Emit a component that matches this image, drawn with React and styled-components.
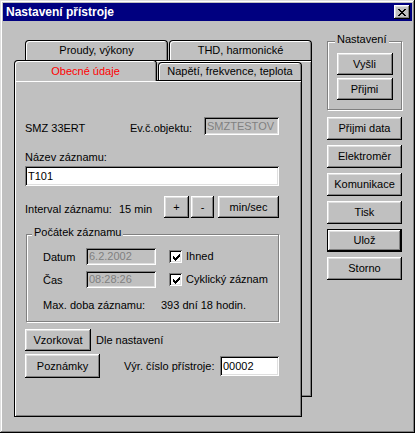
import React from "react";
import styled, { createGlobalStyle, css } from "styled-components";

const Global = createGlobalStyle`
  html, body { margin: 0; padding: 0; background: #c0c0c0; }
  body { font-family: "Liberation Sans", Arial, sans-serif; font-size: 11px; color: #000; }
  * { box-sizing: border-box; }
`;

const raised = css`
  box-shadow: inset -1px -1px 0 #000, inset 1px 1px 0 #fff,
    inset -2px -2px 0 #808080, inset 2px 2px 0 #dfdfdf;
`;
const sunken = css`
  box-shadow: inset 1px 1px 0 #808080, inset -1px -1px 0 #fff,
    inset 2px 2px 0 #000, inset -2px -2px 0 #dfdfdf;
`;

const Window = styled.div`
  width: 415px;
  height: 433px;
  background: #c0c0c0;
  padding: 3px;
  display: flex;
  flex-direction: column;
  box-shadow: inset -1px -1px 0 #000, inset 1px 1px 0 #dfdfdf,
    inset -2px -2px 0 #808080, inset 2px 2px 0 #fff;
`;

const TitleBar = styled.div`
  height: 18px;
  background: #000080;
  display: flex;
  align-items: center;
  justify-content: space-between;
  padding: 0 2px 0 3px;
`;

const TitleText = styled.span`
  color: #fff;
  font-weight: bold;
  font-size: 12px;
  line-height: 14px;
`;

const CloseButton = styled.div`
  width: 16px;
  height: 14px;
  background: #c0c0c0;
  display: grid;
  place-items: center;
  padding-right: 1px;
  ${raised}
`;

const Body = styled.div`
  display: flex;
  padding: 12px 0 0 11px;
`;

const TabStack = styled.div`
  margin-top: 7px;
  width: 298px;
  height: 377px;
  display: grid;
  & > * { grid-area: 1 / 1; }
`;

const BackCard = styled.div`
  margin-left: 11px;
  margin-bottom: 20px;
  display: flex;
  flex-direction: column;
`;

const TabRow = styled.div`
  display: flex;
  gap: 1px;
  height: 20px;
  align-items: flex-end;
  position: relative;
  z-index: 1;
`;

const Tab = styled.div`
  width: ${(p) => p.$w}px;
  height: ${(p) => (p.$active ? 21 : p.$low ? 18 : 20)}px;
  margin-bottom: ${(p) => (p.$active ? -1 : 0)}px;
  background: #c0c0c0;
  border: 1px solid #000;
  border-bottom: none;
  border-radius: 4px 4px 0 0;
  box-shadow: inset 1px 1px 0 #fff, inset -1px 0 0 #808080;
  display: flex;
  align-items: center;
  justify-content: center;
  line-height: 13px;
  padding-top: ${(p) => (p.$active ? 1 : 0)}px;
  color: ${(p) => (p.$active ? "#ff0000" : "#000")};
  white-space: nowrap;
`;

const BackBody = styled.div`
  flex: 1;
  background: #c0c0c0;
  border: 1px solid #000;
  box-shadow: inset 1px 1px 0 #fff, inset -1px -1px 0 #808080;
`;

const FrontCard = styled.div`
  margin-top: 20px;
  margin-right: 10px;
  display: flex;
  flex-direction: column;
`;

const Panel = styled.div`
  flex: 1;
  background: #c0c0c0;
  border: 1px solid #000;
  box-shadow: inset 1px 1px 0 #fff, inset -1px -1px 0 #808080;
  padding: 36px 22px 0 10px;
  display: flex;
  flex-direction: column;
`;

const Row = styled.div`
  display: flex;
  align-items: ${(p) => p.$align || "flex-end"};
  margin-top: ${(p) => p.$mt || 0}px;
`;

const Label = styled.span`
  display: block;
  line-height: 13px;
  white-space: nowrap;
  width: ${(p) => (p.$w ? `${p.$w}px` : "auto")};
  margin-left: ${(p) => p.$ml || 0}px;
  margin-bottom: ${(p) => p.$mb || 0}px;
  margin-top: ${(p) => p.$mt || 0}px;
`;

const Edit = styled.div`
  width: ${(p) => (p.$w ? `${p.$w}px` : "100%")};
  height: ${(p) => p.$h}px;
  margin-top: ${(p) => p.$mt || 0}px;
  margin-left: ${(p) => (p.$auto ? "auto" : "0")};
  background: ${(p) => (p.$disabled ? "#c0c0c0" : "#fff")};
  color: ${(p) => (p.$disabled ? "#808080" : "#000")};
  ${sunken}
  display: flex;
  align-items: center;
  padding: 0 2px 0 3px;
  line-height: 13px;
  white-space: nowrap;
  overflow: hidden;
`;

const Button = styled.div`
  width: ${(p) => p.$w}px;
  height: ${(p) => p.$h}px;
  margin-left: ${(p) => p.$ml || 0}px;
  margin-top: ${(p) => p.$mt || 0}px;
  background: #c0c0c0;
  display: flex;
  align-items: center;
  justify-content: center;
  line-height: 13px;
  white-space: nowrap;
  flex-shrink: 0;
  ${raised}
  ${(p) =>
    p.$default &&
    css`
      border: 1px solid #000;
    `}
`;

const Group = styled.fieldset`
  margin: ${(p) => p.$mt || 0}px 0 0 ${(p) => p.$ml || 0}px;
  padding: 0;
  width: ${(p) => p.$w}px;
  border: 1px solid #808080;
  box-shadow: inset 1px 1px 0 #fff, 1px 1px 0 #fff;
  min-inline-size: 0;
`;

const Legend = styled.legend`
  margin-left: ${(p) => p.$ml}px;
  padding: 0 2px 4px;
  line-height: 13px;
  font-size: 11px;
  background: #c0c0c0;
`;

const GroupBody = styled.div`
  display: flex;
  flex-direction: column;
  align-items: ${(p) => p.$center ? "center" : "stretch"};
  gap: ${(p) => p.$gap || 0}px;
  padding: ${(p) => p.$pad};
`;

const CheckBox = styled.div`
  width: 13px;
  height: 13px;
  background: #fff;
  ${sunken}
  display: grid;
  place-items: center;
  margin-left: 13px;
  align-self: center;
  padding: 1px 0 0 1px;
  flex-shrink: 0;
`;

const Sidebar = styled.div`
  margin-left: 15px;
  width: 75px;
  display: flex;
  flex-direction: column;
`;

const SideButtons = styled.div`
  display: flex;
  flex-direction: column;
  gap: 5px;
  margin-top: 7px;
`;

const Pixels = ({ rows }) => {
  const w = rows[0].length;
  const h = rows.length;
  const rects = [];
  rows.forEach((r, y) =>
    [...r].forEach((c, x) => {
      if (c === "#") rects.push(<rect key={`${x}-${y}`} x={x} y={y} width="1" height="1" />);
    })
  );
  return (
    <svg width={w} height={h} viewBox={`0 0 ${w} ${h}`} fill="#000" shapeRendering="crispEdges">
      {rects}
    </svg>
  );
};

const CLOSE = ["##....##", ".##..##.", "..####..", "...##...", "..####..", ".##..##.", "##....##"];
const CHECK = ["......#", ".....##", "#...###", "##.###.", "#####..", ".###...", "..#...."];

const Check = () => (
  <CheckBox>
    <Pixels rows={CHECK} />
  </CheckBox>
);

export default function App() {
  return (
    <>
      <Global />
      <Window>
        <TitleBar>
          <TitleText>Nastavení přístroje</TitleText>
          <CloseButton>
            <Pixels rows={CLOSE} />
          </CloseButton>
        </TitleBar>
        <Body>
          <TabStack>
            <BackCard>
              <TabRow>
                <Tab $w={143}>Proudy, výkony</Tab>
                <Tab $w={143}>THD, harmonické</Tab>
              </TabRow>
              <BackBody />
            </BackCard>
            <FrontCard>
              <TabRow>
                <Tab $w={143} $active>Obecné údaje</Tab>
                <Tab $w={144} $low>Napětí, frekvence, teplota</Tab>
              </TabRow>
              <Panel>
                <Row>
                  <Label $w={105}>SMZ 33ERT</Label>
                  <Label $w={74}>Ev.č.objektu:</Label>
                  <Edit $w={75} $h={18} $disabled>SMZTESTOV</Edit>
                </Row>
                <Label $mt={16}>Název záznamu:</Label>
                <Edit $h={20} $mt={2}>T101</Edit>
                <Row $mt={10}>
                  <Label $w={94} $mb={2}>Interval záznamu:</Label>
                  <Label $w={45} $mb={2}>15 min</Label>
                  <Button $w={25} $h={22}>+</Button>
                  <Button $w={23} $h={22} $ml={2}>-</Button>
                  <Button $w={61} $h={22} $ml={4}>min/sec</Button>
                </Row>
                <Group $w={253} $mt={8} $ml={1}>
                  <Legend $ml={5}>Počátek záznamu</Legend>
                  <GroupBody $pad="5px 0 9px 16px">
                    <Row>
                      <Label $w={43} $mb={1}>Datum</Label>
                      <Edit $w={70} $h={17} $disabled>6.2.2002</Edit>
                      <Check />
                      <Label $ml={4} $mb={2}>Ihned</Label>
                    </Row>
                    <Row $mt={6}>
                      <Label $w={43} $mb={1}>Čas</Label>
                      <Edit $w={70} $h={17} $disabled>08:28:26</Edit>
                      <Check />
                      <Label $ml={4} $mb={2}>Cyklický záznam</Label>
                    </Row>
                    <Row $mt={11}>
                      <Label $w={118}>Max. doba záznamu:</Label>
                      <Label>393 dní 18 hodin.</Label>
                    </Row>
                  </GroupBody>
                </Group>
                <Row $mt={7} $align="center">
                  <Button $w={66} $h={22}>Vzorkovat</Button>
                  <Label $ml={5}>Dle nastavení</Label>
                </Row>
                <Row $mt={3} $align="center">
                  <Button $w={75} $h={24}>Poznámky</Button>
                  <Label $ml={24}>Výr. číslo přístroje:</Label>
                  <Edit $w={59} $h={20} $auto>00002</Edit>
                </Row>
              </Panel>
            </FrontCard>
          </TabStack>
          <Sidebar>
            <Group $w={75}>
              <Legend $ml={7}>Nastavení</Legend>
              <GroupBody $center $gap={3} $pad="3px 0 9px 0">
                <Button $w={56} $h={22}>Vyšli</Button>
                <Button $w={56} $h={22}>Přijmi</Button>
              </GroupBody>
            </Group>
            <SideButtons>
              <Button $w={75} $h={23}>Přijmi data</Button>
              <Button $w={75} $h={23}>Elektroměr</Button>
              <Button $w={75} $h={23}>Komunikace</Button>
              <Button $w={75} $h={23}>Tisk</Button>
              <Button $w={75} $h={23} $default>Ulož</Button>
              <Button $w={75} $h={23}>Storno</Button>
            </SideButtons>
          </Sidebar>
        </Body>
      </Window>
    </>
  );
}
